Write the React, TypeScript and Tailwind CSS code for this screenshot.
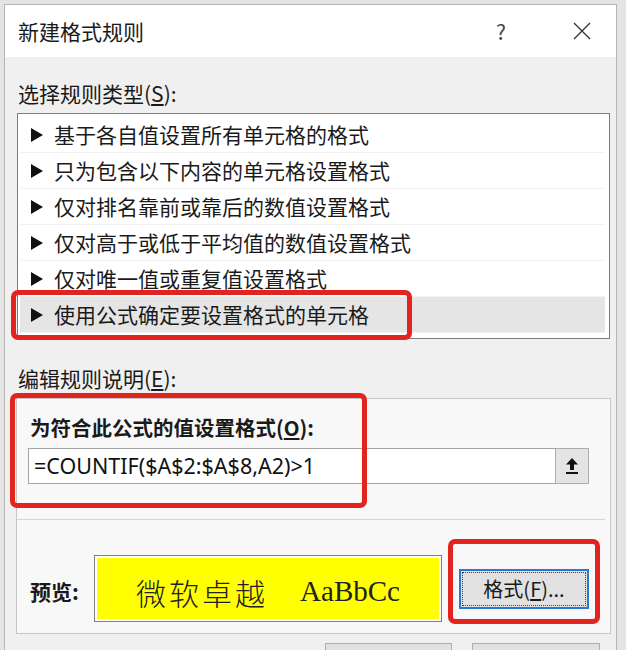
import React from "react";

const cjk = { fontFamily: '"Microsoft YaHei", "Noto Sans CJK SC", sans-serif' };

const rules = [
  "基于各自值设置所有单元格的格式",
  "只为包含以下内容的单元格设置格式",
  "仅对排名靠前或靠后的数值设置格式",
  "仅对高于或低于平均值的数值设置格式",
  "仅对唯一值或重复值设置格式",
  "使用公式确定要设置格式的单元格",
];

const Triangle = () => (
  <svg width="12" height="14" viewBox="0 0 12 14" className="shrink-0">
    <path d="M0 0 L12 7 L0 14 Z" fill="#111" />
  </svg>
);

export default function App() {
  return (
    <div className="relative w-[626px] h-[650px] overflow-hidden bg-[#e4e4e4] pt-[4px] pl-[4px]" style={cjk}>
      {/* Dialog window */}
      <div className="w-[613px] h-[700px] border border-[#b4b4b4] bg-[#f0f0f0] text-[#1a1a1a]">
        {/* Title bar */}
        <div className="h-[52px] bg-white flex items-center pl-[13px]">
          <span className="text-[21px] leading-none">新建格式规则</span>
          <span className="ml-auto text-[21px] leading-none text-[#444] w-[20px] text-center mr-[62px]">?</span>
          <svg width="18" height="18" viewBox="0 0 18 18" className="mr-[25px]">
            <path d="M1 1 L17 17 M17 1 L1 17" stroke="#333" strokeWidth="1.3" />
          </svg>
        </div>

        {/* Rule type */}
        <div className="mt-[22px] ml-[13px] text-[21px] leading-[28px]">
          选择规则类型(<span className="underline underline-offset-2">S</span>):
        </div>
        <div className="mt-[6px] ml-[12px] w-[593px] h-[226px] border border-[#7d7d7d] bg-white pt-[3px] pl-[2px] pr-[4px]">
          {rules.map((rule, i) => (
            <div
              key={i}
              className={`h-[36px] flex items-center pl-[11px] border-b border-[#f2f2f2] ${
                i === 5 ? "bg-[#e5e5e5]" : ""
              }`}
            >
              <Triangle />
              <span className="ml-[11px] text-[21px] leading-none whitespace-nowrap">{rule}</span>
            </div>
          ))}
        </div>

        {/* Rule description */}
        <div className="mt-[25px] ml-[13px] text-[21px] leading-[28px]">
          编辑规则说明(<span className="underline underline-offset-2">E</span>):
        </div>
        <div className="mt-[6px] ml-[11px] w-[595px] h-[236px] border border-[#c6c6c6] bg-[#f8f8f8]">
          <div className="pt-[14px] pl-[13px] text-[20.5px] leading-[28px] font-bold">
            为符合此公式的值设置格式(<span className="underline underline-offset-2">O</span>):
          </div>
          <div className="mt-[7px] ml-[11px] w-[561px] h-[36px] border border-[#a5a5a5] bg-white flex items-center">
            <span
              className="pl-[5px] text-[21.5px] leading-none text-[#111]"
              style={{ fontFamily: '"Segoe UI", "Noto Sans", sans-serif' }}
            >
              =COUNTIF($A$2:$A$8,A2)&gt;1
            </span>
            <div className="ml-auto h-[36px] w-[34px] -mr-px -my-px border border-[#adadad] bg-[#e4e4e4] flex items-center justify-center">
              <svg width="14" height="18" viewBox="0 0 14 18">
                <path d="M7 1 L13 7.5 L9 7.5 L9 13 L5 13 L5 7.5 L1 7.5 Z" fill="#111" />
                <rect x="1" y="15" width="12" height="2" fill="#111" />
              </svg>
            </div>
          </div>
          <div className="mt-[35px] mr-[5px] h-px bg-[#d6d6d6]" />
          <div className="mt-[35px] pl-[13px] flex items-center">
            <span className="w-[64px] text-[21px] leading-none font-bold pt-[6px]">预览:</span>
            <div className="w-[348px] h-[67px] border border-[#808080] bg-white p-[2px]">
              <div className="h-full bg-[#ffff00] flex items-center justify-center pt-[6px]">
                <span className="text-[30px] leading-none font-light text-[#222] tracking-[3px]">微软卓越</span>
                <span
                  className="ml-[32px] text-[29px] leading-none text-[#222]"
                  style={{ fontFamily: '"Liberation Serif", serif' }}
                >
                  AaBbCc
                </span>
              </div>
            </div>
            <div className="ml-[17px] w-[130px] h-[40px] border-2 border-[#2a78d0] bg-[#e1e1e1] p-px">
              <div className="h-full border border-dotted border-[#444] flex items-center justify-center text-[20px] leading-none">
                格式(<span className="underline underline-offset-2">F</span>)...
              </div>
            </div>
          </div>
        </div>

        {/* Bottom buttons */}
        <div className="mt-[9px] flex">
          <div className="ml-[320px] w-[127px] h-[36px] border border-[#adadad] bg-[#e1e1e1]" />
          <div className="ml-[20px] w-[128px] h-[36px] border border-[#adadad] bg-[#e1e1e1]" />
        </div>
      </div>

      {/* Red annotation boxes */}
      <div className="absolute left-[11px] top-[290px] w-[401px] h-[50px] border-[5px] border-[#e3231d] rounded-[7px]" />
      <div className="absolute left-[10px] top-[393px] w-[357px] h-[115px] border-[5px] border-[#e3231d] rounded-[7px]" />
      <div className="absolute left-[448px] top-[539px] w-[152px] h-[85px] border-[5px] border-[#e3231d] rounded-[7px]" />
    </div>
  );
}
